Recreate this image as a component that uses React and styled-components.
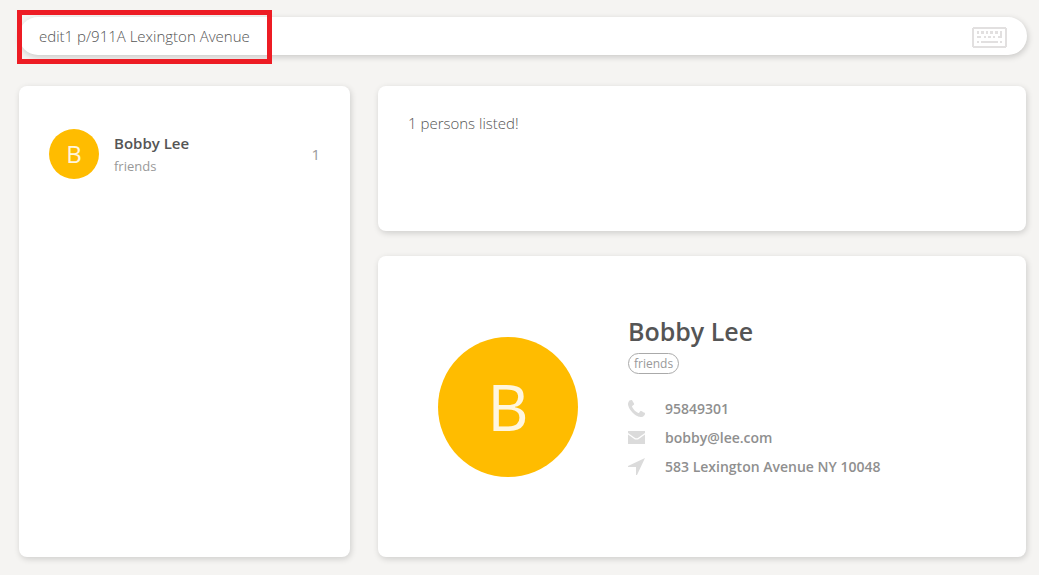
import React from "react";
import styled, { createGlobalStyle } from "styled-components";

const GlobalStyle = createGlobalStyle`
  *, *::before, *::after { box-sizing: border-box; }
  body {
    margin: 0;
    background: #f5f4f2;
    color: #555;
    font-family: "Open Sans", "Noto Sans", sans-serif;
  }
  h2, p, ul { margin: 0; padding: 0; }
`;

const Page = styled.div`
  display: flex;
  flex-direction: column;
  gap: 31px;
  min-height: 100vh;
  padding: 17px 12px 18px 19px;
`;

const CommandBar = styled.form`
  position: relative;
  display: flex;
  align-items: center;
  height: 38px;
  padding: 0 20px;
  border-radius: 19px;
  background: #fff;
  box-shadow: 1px 2px 6px rgba(0, 0, 0, 0.18);
`;

const CommandInput = styled.input`
  flex: 1;
  min-width: 0;
  height: 38px;
  padding: 0;
  border: 0;
  outline: 0;
  background: transparent;
  color: #555;
  font-family: inherit;
  font-size: 15px;
  font-weight: 300;
`;

const Highlight = styled.span`
  position: absolute;
  top: -7px;
  left: -2px;
  width: 255px;
  height: 54px;
  border: 5px solid #ed1c24;
  pointer-events: none;
`;

const Columns = styled.main`
  flex: 1;
  display: grid;
  grid-template-columns: 331fr 648fr;
  gap: 28px;
  padding-right: 1px;
`;

const Card = styled.section`
  border-radius: 8px;
  background: #fff;
  box-shadow: 1px 2px 6px rgba(0, 0, 0, 0.16);
`;

const PersonList = styled(Card).attrs({ as: "ul" })`
  padding: 43px 30px;
  list-style: none;
`;

const PersonRow = styled.li`
  display: flex;
  align-items: center;
  gap: 15px;
`;

const Avatar = styled.span`
  flex: none;
  display: flex;
  align-items: center;
  justify-content: center;
  width: ${(p) => (p.$large ? 140 : 50)}px;
  height: ${(p) => (p.$large ? 140 : 50)}px;
  border-radius: 50%;
  background: #ffbc00;
  color: #fff6e0;
  font-size: ${(p) => (p.$large ? 64 : 24)}px;
  line-height: 1;
`;

const PersonText = styled.div`
  flex: 1;
`;

const PersonName = styled.p`
  font-size: 15px;
  font-weight: 600;
  line-height: 24px;
`;

const PersonTag = styled.p`
  color: #999;
  font-size: 13px;
  line-height: 22px;
`;

const PersonIndex = styled.span`
  color: #999;
  font-size: 15px;
`;

const RightColumn = styled.div`
  display: flex;
  flex-direction: column;
  gap: 25px;
`;

const ResultCard = styled(Card)`
  min-height: 145px;
  padding: 25px 30px;
  color: #555;
  font-size: 15px;
  font-weight: 300;
  line-height: 24px;
`;

const DetailCard = styled(Card)`
  flex: 1;
  display: flex;
  align-items: center;
  gap: 50px;
  padding: 0 60px;
`;

const Details = styled.div`
  display: flex;
  flex-direction: column;
  align-items: flex-start;
  padding-bottom: 20px;
`;

const DetailName = styled.h2`
  font-size: 25px;
  font-weight: 600;
  line-height: 36px;
`;

const Tag = styled.span`
  margin: 4px 0 20px;
  padding: 0 5px;
  border: 1px solid #aaa;
  border-radius: 11px;
  color: #999;
  font-size: 12px;
  line-height: 19px;
`;

const ContactLine = styled.p`
  display: flex;
  align-items: center;
  gap: 20px;
  color: #8f8f8f;
  font-size: 14px;
  font-weight: 600;
  line-height: 29px;
`;

const Icon = styled.svg`
  flex: none;
  display: block;
  fill: #dbdbdb;
`;

const Keyboard = styled(Icon)`
  margin-top: 2px;
  fill: #e2e0e0;
`;

const KeyboardIcon = () => (
  <Keyboard width="35" height="21" viewBox="0 0 35 21" shapeRendering="crispEdges" aria-hidden="true">
    <path fillRule="evenodd" d="M1 0h33v1h1v19h-1v1H1v-1H0V1h1zM2 2v17h31V2z" />
    <path d="M5 4h2v3H5zM9 4h3v3H9zM14 4h2v3h-2zM18 4h3v3h-3zM23 4h3v3h-3zM28 4h2v7h-4V9h2zM5 9h4v2H5zM12 9h2v2h-2zM16 9h3v2h-3zM21 9h2v2h-2zM5 14h2v2H5zM9 14h17v2H9zM28 14h2v2h-2z" />
  </Keyboard>
);

const PhoneIcon = () => (
  <Icon width="17" height="17" viewBox="0 0 1408 1408" aria-hidden="true">
    <path d="M1408 1112q0 27-10 70.500t-20.500 68.500q-21 50-122 106-94 51-186 51-27 0-53-3.500t-57.500-12.500-47-14.500-55.500-20.500-49-18q-98-35-175-83-127-79-264-216t-216-264q-48-77-83-175-3-9-18-49t-20.500-55.500-14.500-47-12.500-57.500-3.500-53q0-92 51-186 56-101 106-122 25-10 68.500-20.500t70.500-10.500q14 0 21 3 18 6 53 76 11 19 30 54t35 63.500 31 53.500q3 4 17.500 25t21.500 35.500 7 28.500q0 20-28.500 50t-62 55-62 53-28.500 46q0 9 5 22.500t8.500 20.500 14 24 11.500 19q76 137 174 235t235 174q2 1 19 11.500t24 14 20.500 8.500 22.500 5q18 0 46-28.500t53-62 55-62 50-28.500q14 0 28.500 7t35.500 21.500 25 17.500q25 15 53.500 31t63.500 35 54 30q70 35 76 53 3 7 3 21z" />
  </Icon>
);

const MailIcon = () => (
  <Icon width="17" height="17" viewBox="0 0 17 17" aria-hidden="true">
    <path d="M0 2h17v2L9.500 9.300h-2L0 4z" />
    <path d="M0 5.500l7 5h3l7-5V15H0z" />
  </Icon>
);

const LocationIcon = () => (
  <Icon width="17" height="17" viewBox="0 0 17 17" aria-hidden="true">
    <path d="M17 0L9 17H8V9H0V8z" />
  </Icon>
);

export default function App() {
  return (
    <>
      <GlobalStyle />
      <Page>
        <CommandBar onSubmit={(e) => e.preventDefault()}>
          <CommandInput aria-label="Command" defaultValue="edit1 p/911A Lexington Avenue" />
          <KeyboardIcon />
          <Highlight />
        </CommandBar>
        <Columns>
          <PersonList>
            <PersonRow>
              <Avatar>B</Avatar>
              <PersonText>
                <PersonName>Bobby Lee</PersonName>
                <PersonTag>friends</PersonTag>
              </PersonText>
              <PersonIndex>1</PersonIndex>
            </PersonRow>
          </PersonList>
          <RightColumn>
            <ResultCard>1 persons listed!</ResultCard>
            <DetailCard>
              <Avatar $large>B</Avatar>
              <Details>
                <DetailName>Bobby Lee</DetailName>
                <Tag>friends</Tag>
                <ContactLine><PhoneIcon />95849301</ContactLine>
                <ContactLine><MailIcon />bobby@lee.com</ContactLine>
                <ContactLine><LocationIcon />583 Lexington Avenue NY 10048</ContactLine>
              </Details>
            </DetailCard>
          </RightColumn>
        </Columns>
      </Page>
    </>
  );
}
